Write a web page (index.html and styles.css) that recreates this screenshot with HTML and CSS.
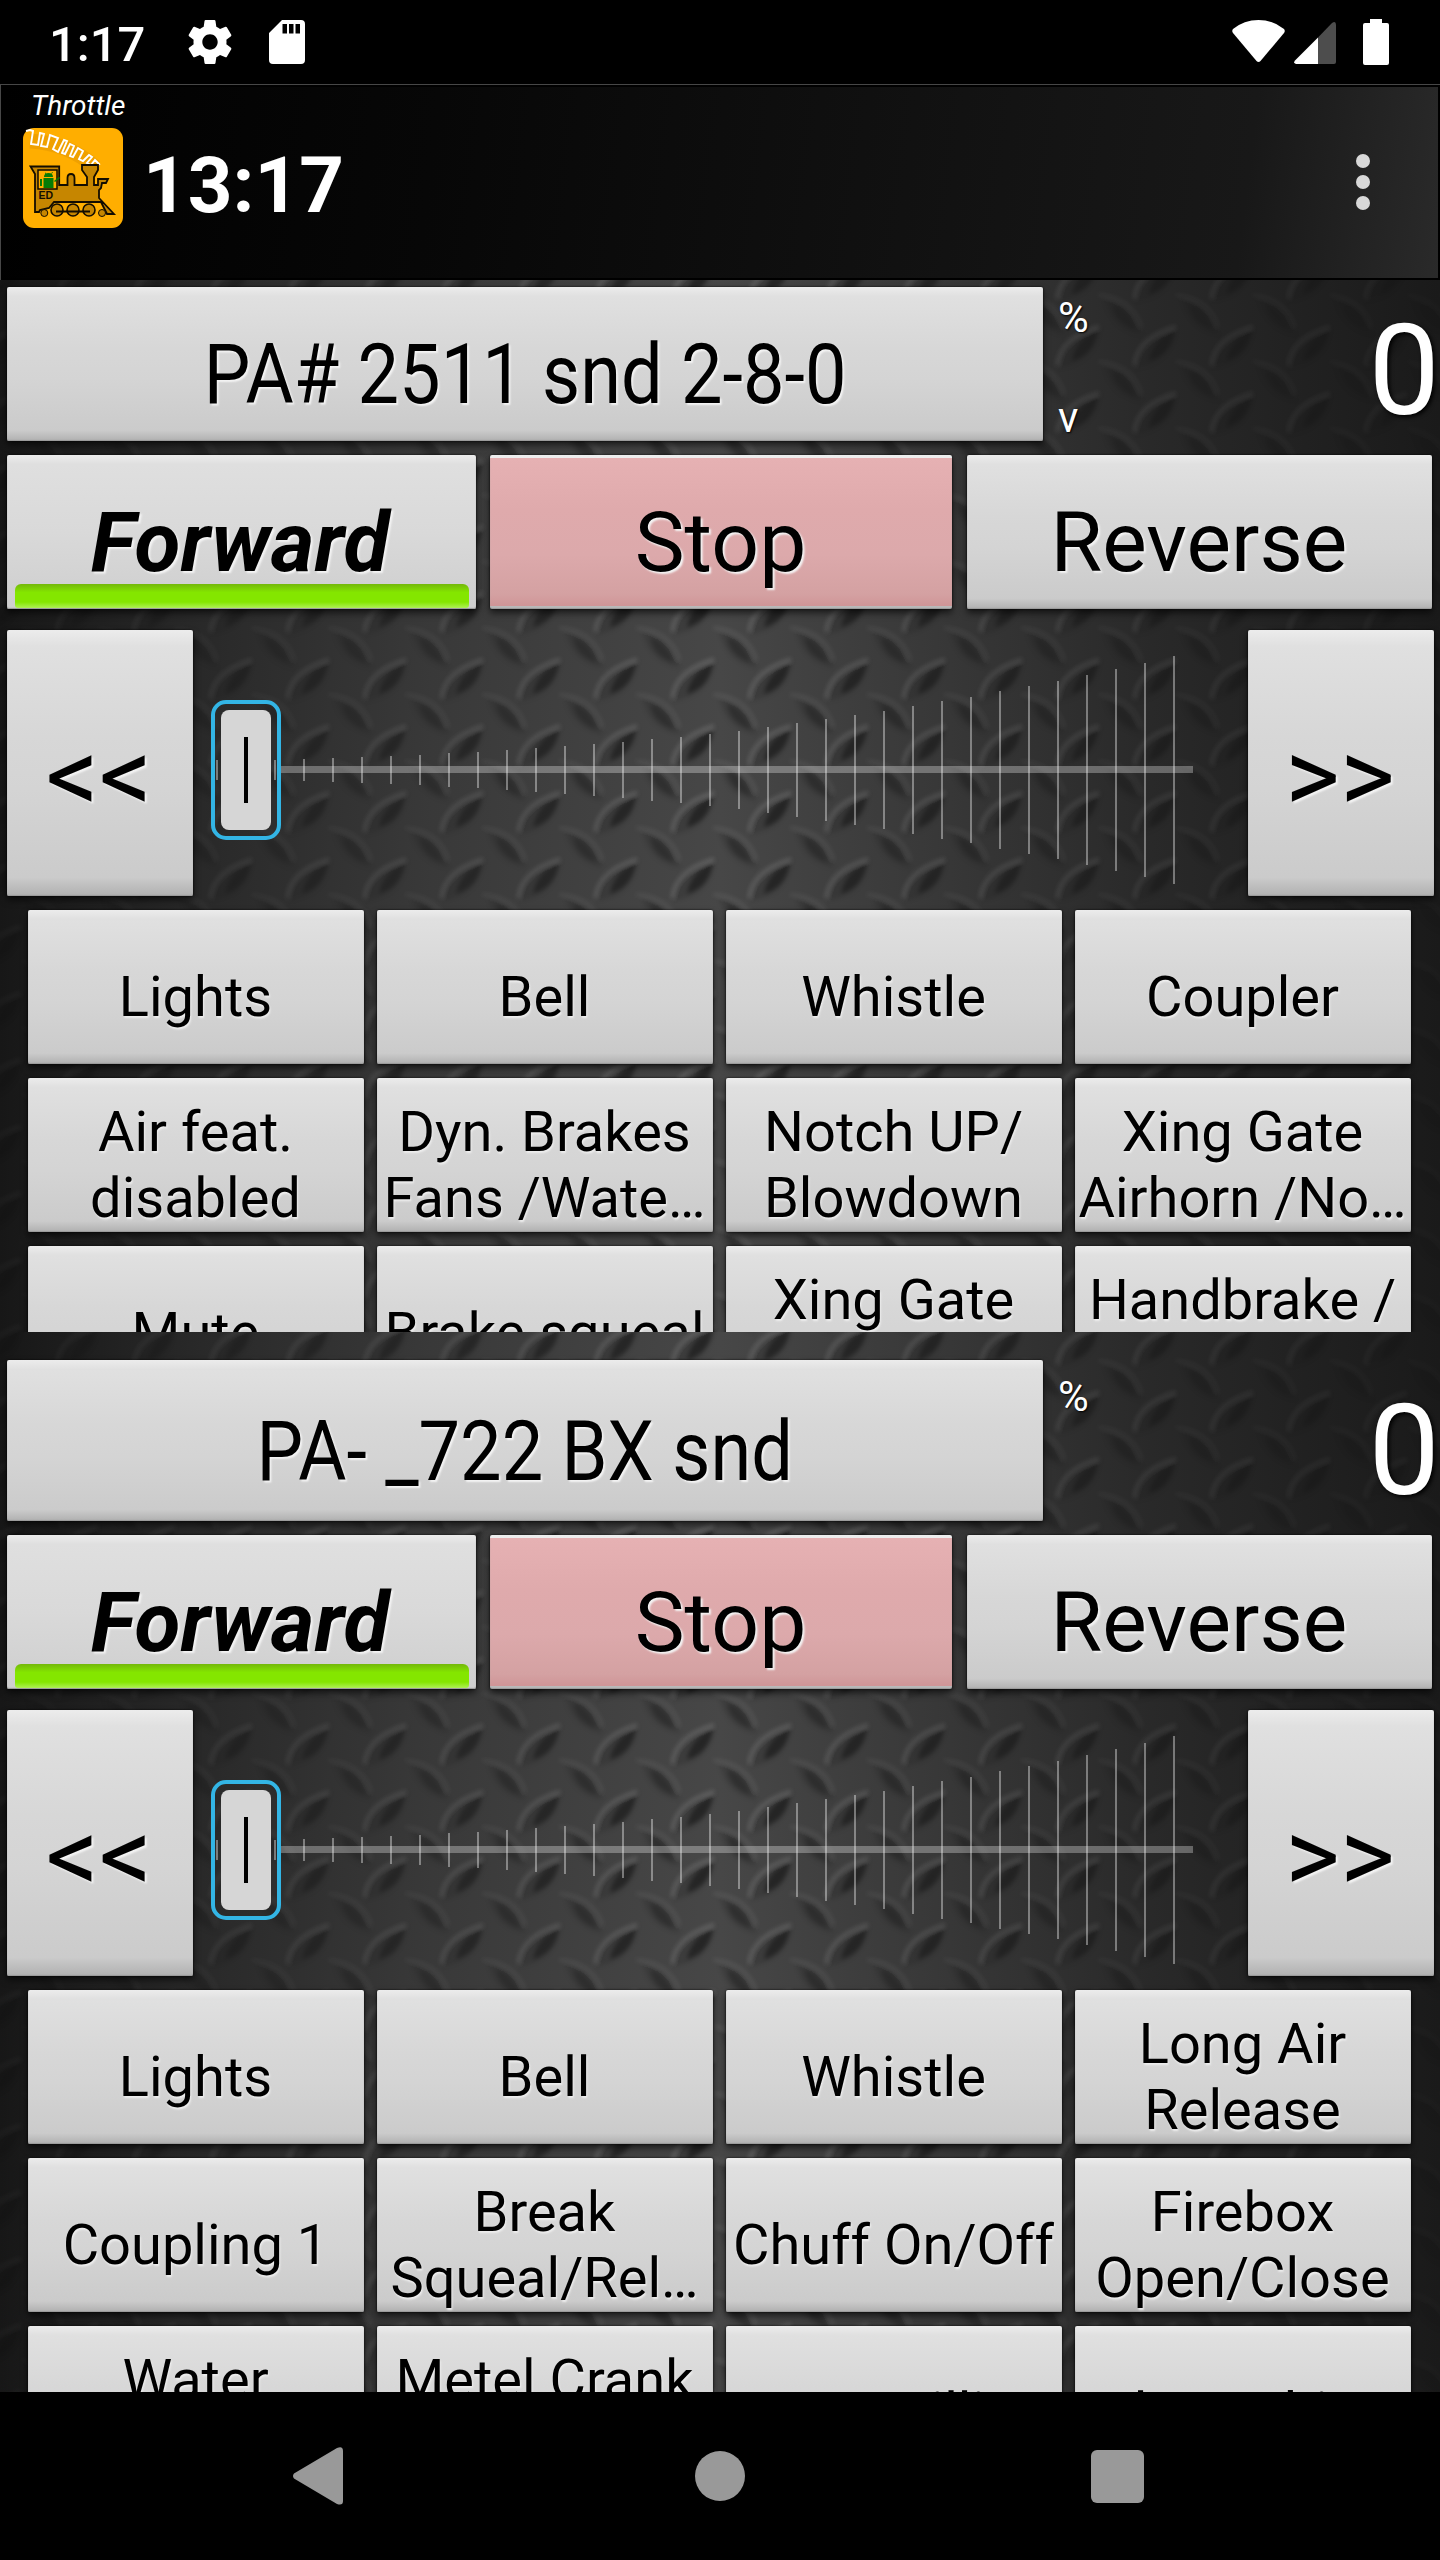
FILE: index.html
```html
<!DOCTYPE html>
<html lang="en">
<head>
<meta charset="utf-8">
<title>Throttle</title>
<link rel="stylesheet" href="styles.css">
</head>
<body>
<svg class="defs" width="0" height="0" aria-hidden="true">
  <defs>
    <symbol id="slider" viewBox="193 630 1055 266">
      <path d="M281 769.5H1193" stroke="#fff" stroke-opacity=".3" stroke-width="7"/>
      <path stroke="#fff" stroke-opacity=".38" stroke-width="2" d="M217 760v20M275 760v20M304 759v22M333 758v24M362 757v26M391 756v28M420 755v30M449 753v34M478 752v36M507 750v40M536 748v44M565 746v48M594 744v52M623 742v56M652 739v62M681 737v66M710 734v72M739 731v78M768 727v86M797 723v94M826 719v102M855 715v110M884 711v118M913 706v128M942 701v138M971 697v146M1000 691v158M1029 686v168M1058 681v178M1087 675v190M1116 669v202M1145 663v214M1174 656v228"/>
      <rect x="213" y="702" width="66" height="136" rx="13" fill="none" stroke="#33b5e5" stroke-width="4"/>
      <rect x="221" y="710" width="50" height="120" rx="8" fill="#d6d6d6"/>
      <path d="M246 737v66" stroke="#000" stroke-width="4"/>
    </symbol>
  </defs>
</svg>

<div class="status">
  <div class="status-left">
    <span class="clock">1:17</span>
    <svg class="gear" width="44" height="44" viewBox="2 2 20 20"><path fill="#fff" d="M19.43 12.98c.04-.32.07-.64.07-.98s-.03-.66-.07-.98l2.11-1.65c.19-.15.24-.42.12-.64l-2-3.46c-.12-.22-.39-.3-.61-.22l-2.49 1c-.52-.4-1.08-.73-1.69-.98l-.38-2.65C14.46 2.18 14.25 2 14 2h-4c-.25 0-.46.18-.49.42l-.38 2.65c-.61.25-1.17.59-1.69.98l-2.49-1c-.23-.09-.49 0-.61.22l-2 3.46c-.13.22-.07.49.12.64l2.11 1.65c-.04.32-.07.65-.07.98s.03.66.07.98l-2.11 1.65c-.19.15-.24.42-.12.64l2 3.46c.12.22.39.3.61.22l2.49-1c.52.4 1.08.73 1.69.98l.38 2.65c.03.24.24.42.49.42h4c.25 0 .46-.18.49-.42l.38-2.65c.61-.25 1.17-.59 1.69-.98l2.49 1c.23.09.49 0 .61-.22l2-3.46c.12-.22.07-.49-.12-.64l-2.11-1.65zM12 15.5c-1.93 0-3.5-1.57-3.5-3.5s1.57-3.5 3.5-3.5 3.5 1.57 3.5 3.5-1.57 3.5-3.5 3.5z"/></svg>
    <svg class="sd" width="36" height="44" viewBox="0 0 36 44"><path fill="#fff" fill-rule="evenodd" d="M13 0H32Q36 0 36 4V40Q36 44 32 44H4Q0 44 0 40V13zM13.500 4v9.500h4.500V4zM20 4v9.500h4.500V4zM26.500 4v9.500H31V4z"/></svg>
  </div>
  <div class="status-right">
    <svg width="53" height="43" viewBox="0 0 53 43"><path fill="#fff" d="M1 9Q12 0 26.500 0T52 9Q53.500 11 52 13L28.500 41q-2 2-4 0L1 13Q-.5 11 1 9z"/></svg>
    <svg class="cell" width="42" height="42" viewBox="0 0 42 42"><path fill="#4d4d4d" d="M24 15.500 38 1q4-2.500 4 2v37q0 2-2 2H24z"/><path fill="#fff" d="M1 38.500 24 15.500V42H2q-3-1-1-3.500z"/></svg>
    <svg width="26" height="46" viewBox="0 0 26 46"><path fill="#fff" d="M7 0h12v4h5q2 0 2 2v38q0 2-2 2H2q-2 0-2-2V6q0-2 2-2h5z"/></svg>
  </div>
</div>

<header class="appbar">
  <div class="brand">
    <div class="screen-name">Throttle</div>
    <svg class="logo" width="100" height="100" viewBox="0 0 100 100">
      <rect width="100" height="100" rx="11" fill="#ffae00"/>
      <path d="M7 13Q45 15 72 39" fill="none" stroke="#c98000" stroke-opacity=".28" stroke-width="15"/>
      <path d="M3 3l4-1 3 1-2 13 7 1 2-12 4 1-3 12 6 1 3-12 8 3-5 11 5 3 6-12 3 1-5 12 3 1 5-10 4 2-4 10 3 1 5-9 5 3-4 8 4 2 6-6 3 2-5 6 4 2 4-5 4 4-4 2" fill="none" stroke="#fff" stroke-width="1.900"/>
      <path d="M7.500 38.500h28.700V57h8.300v-7q0-4 3.500-4t3.500 4v7H64v-8l-5-7v-5h16v5l-4 7v8h4v-6h10l-2 4h-4l-1 5-2 2v8l15 16h-7l-6-12H31l-5 6-9 2-1 2h-4V46z" fill="#c68600" stroke="#130d00" stroke-width="1.800"/>
      <path d="M15 42h19v19H15z" fill="#ffae00" stroke="#130d00" stroke-width="1.500"/>
      <path d="M21 49q0-4 4.500-4t4.500 4zM20.500 50h10v10h-10zM17 51h2v7h-2zM31 53l5-4 1 1-5 4zM22 44l1 2-1 1zM29 44l1 0-2 3z" fill="#057c05"/>
      <text class="logo-text" x="15.500" y="71">ED</text>
      <g fill="#c68600" stroke="#130d00" stroke-width="1.600"><circle cx="34" cy="82" r="6"/><circle cx="50" cy="82" r="6"/><circle cx="66" cy="82" r="6"/><circle cx="21.300" cy="85" r="3.500" stroke-width="1"/><circle cx="79" cy="85" r="3.500" stroke-width="1"/></g>
      <path d="M33 83.500h34" stroke="#130d00" stroke-width="2"/>
    </svg>
  </div>
  <div class="time">13:17</div>
  <svg class="more" width="14" height="56" viewBox="0 0 14 56"><g fill="#d8d8d8"><circle cx="7" cy="7" r="7"/><circle cx="7" cy="28" r="7"/><circle cx="7" cy="49" r="7"/></g></svg>
</header>

<main class="panel">
  <svg class="plate" width="1440" height="2112" aria-hidden="true">
    <defs>
      <linearGradient id="shade"><stop offset="0" stop-color="#171717"/><stop offset=".14" stop-color="#292929"/><stop offset=".3" stop-color="#393939"/><stop offset=".5" stop-color="#474747"/><stop offset=".64" stop-color="#393939"/><stop offset=".8" stop-color="#292929"/><stop offset="1" stop-color="#1a1a1a"/></linearGradient>
      <linearGradient id="fade"><stop offset="0" stop-color="#333"/><stop offset=".5" stop-color="#fff"/><stop offset="1" stop-color="#333"/></linearGradient>
      <filter id="soft" x="-20%" y="-20%" width="140%" height="140%"><feGaussianBlur stdDeviation="2"/></filter>
      <pattern id="tread" width="77" height="66.600" patternUnits="userSpaceOnUse" x="271" y="368">
        <g filter="url(#soft)">
          <path d="M17 53Q17 24 59 13Q54 48 17 53z" fill="#000" fill-opacity=".13"/>
          <path d="M31 46Q35 24 57 15Q53 40 31 46z" fill="#000" fill-opacity=".4"/>
          <path d="M16 50Q19 23 58 11" fill="none" stroke="#fff" stroke-opacity=".16" stroke-width="3"/>
          <g id="back">
            <path d="M-14-18Q16-12 24 20Q-8 14-14-18z" fill="#000" fill-opacity=".12"/>
            <path d="M-6-11Q12-6 18 15Q-3 8-6-11z" fill="#000" fill-opacity=".24"/>
            <path d="M-20-20Q14-18 24 12" fill="none" stroke="#fff" stroke-opacity=".08" stroke-width="3"/>
          </g>
          <use href="#back" x="77"/>
          <use href="#back" y="66.600"/>
          <use href="#back" x="77" y="66.600"/>
        </g>
      </pattern>
      <mask id="edges"><rect width="1440" height="2112" fill="url(#fade)"/></mask>
    </defs>
    <rect width="1440" height="2112" fill="url(#shade)"/>
    <rect width="1440" height="2112" fill="url(#tread)" mask="url(#edges)"/>
  </svg>

  <section class="throttle first">
    <div class="loco-row">
      <button class="btn loco"><span class="narrow">PA# 2511 snd 2-8-0</span></button>
      <div class="units"><span>%</span><span>v</span></div>
      <div class="speed">0</div>
    </div>
    <div class="direction">
      <button class="btn forward">Forward</button>
      <button class="btn stop">Stop</button>
      <button class="btn">Reverse</button>
    </div>
    <div class="speed-row">
      <button class="btn step">&lt;&lt;</button>
      <svg class="slider" width="1055" height="266"><use href="#slider"/></svg>
      <button class="btn step">&gt;&gt;</button>
    </div>
    <div class="functions">
      <button class="btn fn">Lights</button>
      <button class="btn fn">Bell</button>
      <button class="btn fn">Whistle</button>
      <button class="btn fn">Coupler</button>
      <button class="btn fn">Air feat.<br>disabled</button>
      <button class="btn fn">Dyn. Brakes<br>Fans /Wate…</button>
      <button class="btn fn">Notch UP/<br>Blowdown</button>
      <button class="btn fn">Xing Gate<br>Airhorn /No…</button>
      <button class="btn fn">Mute</button>
      <button class="btn fn">Brake squeal</button>
      <button class="btn fn">Xing Gate<br>&nbsp;</button>
      <button class="btn fn">Handbrake /<br>&nbsp;</button>
    </div>
  </section>

  <section class="throttle second">
    <div class="loco-row">
      <button class="btn loco"><span class="narrow">PA- _722 BX snd</span></button>
      <div class="units"><span>%</span></div>
      <div class="speed">0</div>
    </div>
    <div class="direction">
      <button class="btn forward">Forward</button>
      <button class="btn stop">Stop</button>
      <button class="btn">Reverse</button>
    </div>
    <div class="speed-row">
      <button class="btn step">&lt;&lt;</button>
      <svg class="slider" width="1055" height="266"><use href="#slider"/></svg>
      <button class="btn step">&gt;&gt;</button>
    </div>
    <div class="functions">
      <button class="btn fn">Lights</button>
      <button class="btn fn">Bell</button>
      <button class="btn fn">Whistle</button>
      <button class="btn fn">Long Air<br>Release</button>
      <button class="btn fn">Coupling 1</button>
      <button class="btn fn">Break<br>Squeal/Rel…</button>
      <button class="btn fn">Chuff On/Off</button>
      <button class="btn fn">Firebox<br>Open/Close</button>
      <button class="btn fn">Water<br>&nbsp;</button>
      <button class="btn fn">Metel Crank<br>&nbsp;</button>
      <button class="btn fn">Water Filling</button>
      <button class="btn fn">Blower hiss</button>
    </div>
  </section>
</main>

<nav class="navbar">
  <svg width="50" height="58" viewBox="0 0 50 58"><path fill="#999" d="M1 26.500 44 1q6-2.500 6 3v50q0 5-6 3L1 31.500q-2-2.500 0-5z"/></svg>
  <svg class="home" width="50" height="50" viewBox="0 0 50 50"><circle cx="25" cy="25" r="25" fill="#999"/></svg>
  <svg width="53" height="53" viewBox="0 0 53 53"><rect width="53" height="53" rx="6" fill="#999"/></svg>
</nav>
</body>
</html>
```
FILE: styles.css
```css
* { box-sizing: border-box; }

body {
  margin: 0;
  width: 1440px;
  height: 2560px;
  overflow: hidden;
  display: flex;
  flex-direction: column;
  background: #000;
  color: #fff;
  font-family: Roboto, "Noto Sans", sans-serif;
}

svg { display: block; flex: none; }
.defs { position: absolute; }

.status {
  height: 84px;
  flex: none;
  display: flex;
  justify-content: space-between;
  align-items: flex-start;
  padding: 19px 51px 0 49px;
}
.status-left, .status-right { display: flex; }
.clock {
  width: 139px;
  font-size: 49px;
  font-weight: 500;
  line-height: 51px;
}
.gear { margin-top: 1px; }
.sd { margin: 1px 0 0 37px; }
.status-right svg:first-child { margin-top: 1px; }
.cell { margin: 3px 27px 0 9px; }

.appbar {
  height: 196px;
  flex: none;
  display: flex;
  padding-left: 22px;
  border-top: 1px solid #474747;
  border-left: 1px solid #474747;
  box-shadow: inset 0 0 0 2px #000;
  background: linear-gradient(97deg, #000 0%, #070707 30%, #121212 66%, #181818 86%, #2a2a2a 100%);
}
.brand { width: 120px; }
.screen-name {
  height: 43px;
  padding: 4px 0 0 8px;
  font-size: 28px;
  font-style: italic;
  line-height: 33px;
}
.logo-text { font: bold 10.500px "Liberation Sans", sans-serif; fill: #130d00; }
.time {
  padding-top: 55px;
  font-size: 78px;
  font-weight: 700;
  line-height: 92px;
}
.more { margin: 69px 70px 0 auto; }

.panel {
  position: relative;
  height: 2112px;
  flex: none;
  overflow: hidden;
}
.plate { position: absolute; inset: 0; }

.throttle { position: relative; display: flex; flex-direction: column; overflow: hidden; }
.first { height: 1052px; padding-top: 7px; }
.second { height: 1060px; padding-top: 28px; }

.btn {
  margin: 0;
  border: 0;
  padding: 22px 1px 0 0;
  display: flex;
  align-items: center;
  justify-content: center;
  border-radius: 2px;
  color: #000;
  font: 84px/98px Roboto, "Noto Sans", sans-serif;
  text-align: center;
  white-space: nowrap;
  text-shadow: 2px 2px 2px #f4f4f4;
  background: linear-gradient(#ececec 0, #e0e0e0 6%, #d7d7d7 40%, #d4d4d4 60%, #cbcbcb 93%, #b0b0b0 100%);
  box-shadow: 0 0 2px #000, 0 4px 7px rgba(0, 0, 0, .6), inset 0 -1px 1px #999;
}

.loco-row { display: flex; height: 154px; margin-left: 7px; flex: none; }
.second .loco-row { height: 161px; }
.loco { width: 1036px; padding-right: 0; }
.narrow { transform: scaleX(.88); }
.units {
  width: 120px;
  padding-left: 15px;
  font-size: 42px;
  line-height: 49px;
  display: flex;
  flex-direction: column;
  gap: 51px;
  padding-top: 6px;
}
.units span { text-shadow: 1px 1px 2px #000; }
.second .units { padding-top: 12px; }
.speed {
  flex: 1;
  text-align: right;
  font-size: 127px;
  line-height: 148px;
  padding-top: 10px;
  text-shadow: 2px 2px 4px #000;
}
.second .speed { padding-top: 17px; }

.direction {
  display: grid;
  grid-template-columns: 469px 462px 466px;
  column-gap: 14px;
  height: 154px;
  margin: 14px 0 0 7px;
  flex: none;
}
.direction .btn:last-child { margin-left: 1px; }
.forward {
  padding-right: 3px;
  font-weight: 700;
  font-style: italic;
  background:
    linear-gradient(#ececec 0, #dfdfdf 6%, #d9d9d9 50%, #cecece 100%);
  position: relative;
}
.forward::after {
  content: "";
  position: absolute;
  left: 8px;
  bottom: 1px;
  width: 454px;
  height: 24px;
  border-radius: 6px 6px 3px 3px;
  background: linear-gradient(#74b80a 0, #84e600 35%, #84e600 75%, #aef055 100%);
}
.stop {
  background:
    linear-gradient(#e6b1b3, #dfaaac 35%, #dca9ab 65%, #d4a1a2 92%, #cf9597) 0 3px / 100% 148px no-repeat,
    linear-gradient(#eee, #b8b8b8);
}

.speed-row { display: flex; height: 266px; margin: 21px 0 0 7px; flex: none; }
.step { width: 186px; font-size: 105px; padding-top: 27px; padding-right: 2px; }

.functions {
  display: grid;
  grid-template-columns: repeat(4, 336px);
  grid-auto-rows: 154px;
  gap: 14px 13px;
  margin: 14px 0 0 28px;
  flex: none;
}
.fn { padding-top: 20px; font-size: 56px; line-height: 66px; text-shadow: 1px 2px 2px #eee; }

.navbar {
  height: 168px;
  display: flex;
  justify-content: space-between;
  align-items: center;
  padding: 0 296px 0 293px;
}
.home { margin-left: 5px; }
```
